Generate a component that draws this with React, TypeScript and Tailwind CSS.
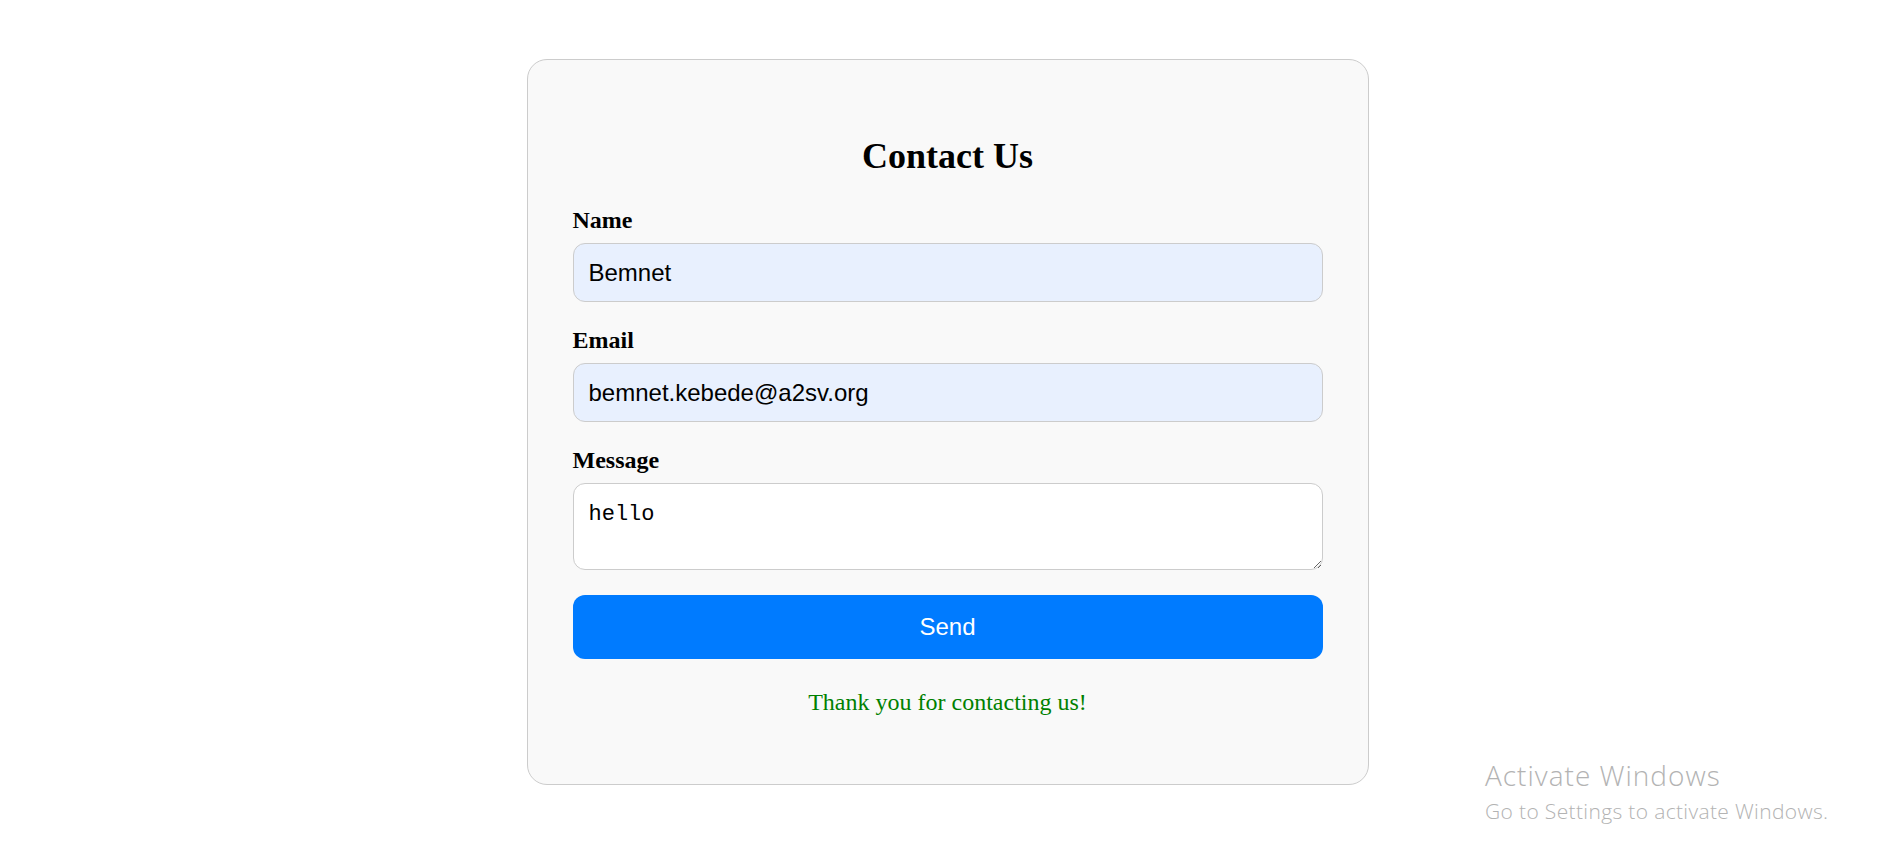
import React from "react";

export default function App() {
  const serif = { fontFamily: '"Liberation Serif", "Times New Roman", serif' };
  return (
    <div className="relative min-h-[846px] w-full bg-white overflow-hidden">
      <div className="flex justify-center pl-[10px] pt-[59px]">
        <div
          className="w-[842px] rounded-[20px] border border-[#cccccc] bg-[#f9f9f9] px-[45px] pt-[45px] pb-[45px]"
          style={serif}
        >
          <h2 className="mt-[31px] mb-[29px] text-center text-[36px] font-bold leading-[41px] text-black font-['Liberation_Serif',serif]">
            Contact Us
          </h2>
          <form className="flex flex-col" onSubmit={(e) => e.preventDefault()}>
            <label className="mb-[9px] block text-[24px] font-bold leading-[28px] text-black font-['Liberation_Serif',serif]">
              Name
            </label>
            <input
              type="text"
              defaultValue="Bemnet"
              className="h-[59px] w-full rounded-[12px] border border-[#cccccc] bg-[#e8f0fe] px-[15px] text-[24px] text-black outline-none font-['Liberation_Sans',Arial,sans-serif]"
            />
            <label className="mt-[24px] mb-[9px] block text-[24px] font-bold leading-[28px] text-black font-['Liberation_Serif',serif]">
              Email
            </label>
            <input
              type="email"
              defaultValue="bemnet.kebede@a2sv.org"
              className="h-[59px] w-full rounded-[12px] border border-[#cccccc] bg-[#e8f0fe] px-[15px] text-[24px] text-black outline-none font-['Liberation_Sans',Arial,sans-serif]"
            />
            <label className="mt-[24px] mb-[9px] block text-[24px] font-bold leading-[28px] text-black font-['Liberation_Serif',serif]">
              Message
            </label>
            <textarea
              defaultValue="hello"
              className="block h-[87px] w-full rounded-[12px] border border-[#cccccc] bg-white px-[15px] pt-[17px] pb-[13px] text-[22px] leading-[28px] text-black outline-none font-['Liberation_Mono',monospace]"
            />
            <button
              type="submit"
              className="mt-[25px] h-[64px] w-full rounded-[12px] bg-[#007bff] text-[24px] text-white font-['Liberation_Sans',Arial,sans-serif]"
            >
              Send
            </button>
          </form>
          <p className="mt-[29px] mb-[23px] text-center text-[24px] leading-[28px] text-[#008000] font-['Liberation_Serif',serif]">
            Thank you for contacting us!
          </p>
        </div>
      </div>
      <div className="absolute left-[1485px] top-[757px] text-[#b3b3b3] font-['Open_Sans',sans-serif] font-light whitespace-nowrap">
        <div className="text-[28px] leading-[36px] tracking-[1px]">Activate Windows</div>
        <div className="mt-[4px] text-[21px] leading-[28px] tracking-[0.35px]">Go to Settings to activate Windows.</div>
      </div>
    </div>
  );
}
